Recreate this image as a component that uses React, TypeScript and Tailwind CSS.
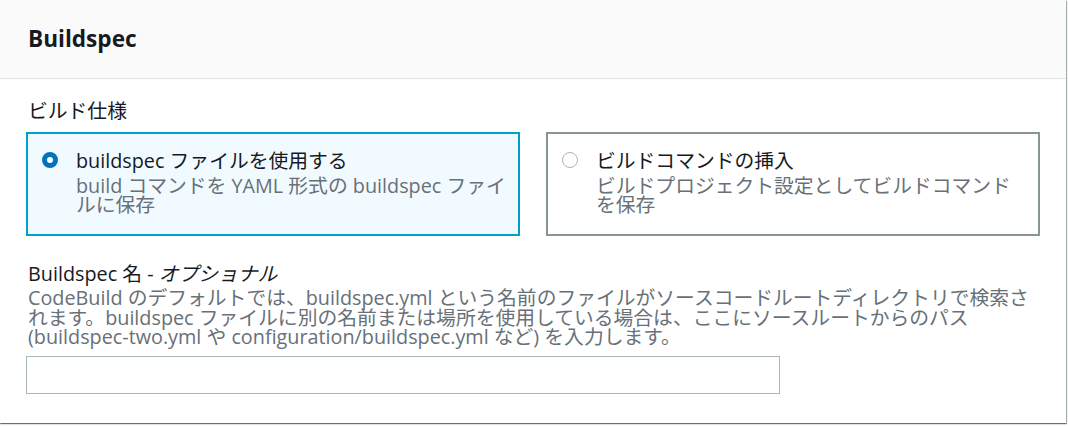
import React from "react";

const FONT = {
  fontFamily:
    '"Open Sans", "Noto Sans CJK JP", "Noto Sans", sans-serif',
};

function Radio({ checked }: { checked: boolean }) {
  return checked ? (
    <span className="mt-[3px] block h-[16px] w-[16px] shrink-0 rounded-full border-[5px] border-[#0073bb] bg-white" />
  ) : (
    <span className="mt-[3px] block h-[16px] w-[16px] shrink-0 rounded-full border-[1.5px] border-[#aab7b8] bg-white" />
  );
}

function Option({
  checked,
  title,
  lines,
}: {
  checked: boolean;
  title: string;
  lines: string[];
}) {
  return (
    <div
      className={
        checked
          ? "flex h-[104px] gap-[18px] border-2 border-[#00a1c9] bg-[#f1faff] pl-[14px] pt-[15px]"
          : "flex h-[104px] gap-[18px] border-2 border-[#879596] bg-white pl-[14px] pt-[15px]"
      }
    >
      <Radio checked={checked} />
      <div className="whitespace-nowrap">
        <div className="text-[19.8px] leading-[24px] text-[#16191f]">{title}</div>
        <div className="mt-[3px] text-[19.8px] leading-[19px] text-[#687078]">
          {lines.map((l, i) => (
            <div key={i}>{l}</div>
          ))}
        </div>
      </div>
    </div>
  );
}

export default function App() {
  return (
    <div className="h-[426px] w-[1068px] overflow-hidden bg-white" style={FONT}>
      <div className="h-[423px] w-[1066px] bg-white shadow-[0_1px_1px_0_rgba(0,28,36,0.45),1px_1px_1px_0_rgba(0,28,36,0.3)]">
        <div className="flex h-[79px] items-center border-b border-[#e1e4e4] bg-[#fafafa] pl-[28px]">
          <h2 className="text-[22.6px] font-bold leading-none text-[#16191f]">
            Buildspec
          </h2>
        </div>

        <div className="px-[26px] pt-[20px]">
          <div className="pl-[2px] text-[19.8px] leading-[24px] text-[#16191f]">
            ビルド仕様
          </div>
          <div className="mt-[9px] grid grid-cols-[494px_494px] gap-x-[26px]">
            <Option
              checked
              title="buildspec ファイルを使用する"
              lines={[
                "build コマンドを YAML 形式の buildspec ファイ",
                "ルに保存",
              ]}
            />
            <Option
              checked={false}
              title="ビルドコマンドの挿入"
              lines={[
                "ビルドプロジェクト設定としてビルドコマンド",
                "を保存",
              ]}
            />
          </div>

          <div className="mt-[26px] whitespace-nowrap pl-[2px]">
            <div className="text-[19.8px] leading-[24px] text-[#16191f]">
              Buildspec 名 - <i>オプショナル</i>
            </div>
            <div className="mt-[2px] text-[19.8px] leading-[19.5px] text-[#687078]">
              <div>
                CodeBuild のデフォルトでは、buildspec.yml という名前のファイルがソースコードルートディレクトリで検索さ
              </div>
              <div>
                れます。buildspec ファイルに別の名前または場所を使用している場合は、ここにソースルートからのパス
              </div>
              <div>
                (buildspec-two.yml や configuration/buildspec.yml など) を入力します。
              </div>
            </div>
          </div>
          <input
            type="text"
            className="mt-[9px] block h-[38px] w-[754px] border border-[#aab7b8] bg-white px-[10px] text-[18px] outline-none"
          />
        </div>
      </div>
    </div>
  );
}
